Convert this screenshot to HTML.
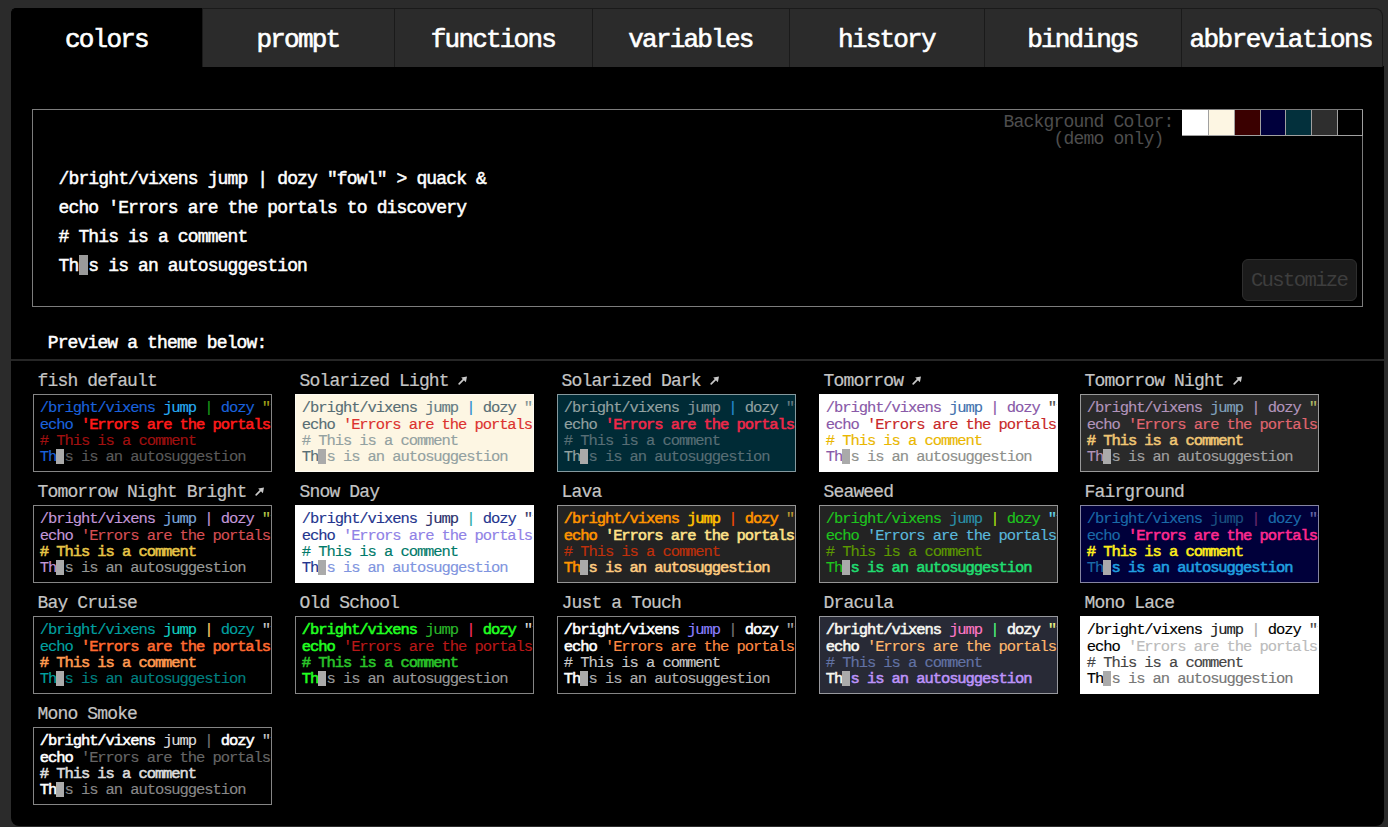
<!DOCTYPE html>
<html><head><meta charset="utf-8"><title>fish shell configuration</title>
<style>
html,body{margin:0;padding:0}
body{width:1388px;height:827px;overflow:hidden;position:relative;background:#2b2b2b;font-family:"Liberation Mono",monospace;color:#fff}
div,svg{position:absolute;box-sizing:border-box}
.wrap{left:11px;top:66px;width:1373px;height:760px;background:#000;border-radius:0 0 8px 8px;overflow:hidden}
.tab{top:8px;height:59px;background:#2b2b2b;border-top:1px solid #1a1a1a;border-left:1px solid #1a1a1a;text-align:center;font-size:26px;letter-spacing:-1.8px;line-height:30px;padding-top:16px;-webkit-text-stroke-width:0.6px}
.tab span{position:relative;left:-0.6px}
.tab.ab span{letter-spacing:-1.55px;left:-1.2px}
.tab.ab{border-right:1px solid #1a1a1a;border-top-right-radius:8px}
.tab.sel{background:#000;border-color:#000;border-top-left-radius:5px}
.tabr{border-top-right-radius:5px}
.mbox{left:32px;top:109px;width:1331px;height:198px;border:1px solid #7c7c7c}
.mtext{left:58.5px;top:165.3px;-webkit-text-stroke-width:0.5px;font-size:18px;letter-spacing:-0.86px;line-height:28.77px;white-space:pre;color:#fff}
.mcur{left:79.4px;top:255.4px;width:9.1px;height:19.6px;background:#9a9a9a}
.bgl{font-size:18px;letter-spacing:-0.8px;color:#4e4e4e;white-space:pre;line-height:normal;text-align:right}
.sw{top:110px;height:25px}
.swl{top:109px;width:1px;height:27px;background:#a0a0a0}
.swb{left:1182px;top:135px;width:181px;height:1px;background:#a0a0a0}
.swt{left:1182px;top:109px;width:181px;height:1px;background:#7c7c7c}
.btn{left:1242px;top:259px;width:115px;height:42px;border:1px solid #2e2e2e;border-radius:6px;background:#1b1b1b}
.btnt{left:1250.9px;top:269.15px;font-size:20.6px;letter-spacing:-1.65px;color:#3e3e3e;white-space:pre;line-height:normal}
.prev{left:47.7px;top:333px;-webkit-text-stroke-width:0.5px;font-size:18px;letter-spacing:-0.86px;white-space:pre;line-height:normal}
.hr{left:11px;top:359px;width:1373px;height:2px;background:#262626}
.tt{font-size:18px;letter-spacing:-0.86px;color:#c4c4c4;-webkit-text-stroke-width:0.2px;white-space:pre;line-height:normal}
.tb{width:239px;height:78px;border:1px solid rgba(255,255,255,0.52);overflow:hidden}
.tp{left:5.8px;top:5.4px;font-size:15.5px;letter-spacing:-1.08px;line-height:16.27px;white-space:pre;-webkit-text-stroke-width:0.15px}
.cur{left:22.2px;top:54.4px;width:7.5px;height:15px;background:#aaa}
</style></head><body>
<div class="wrap"></div>
<div class="tab sel" style="left:11px;width:191px"><span>colors</span></div><div class="tab" style="left:202px;width:192px"><span>prompt</span></div><div class="tab" style="left:394px;width:198px"><span>functions</span></div><div class="tab" style="left:592px;width:197px"><span>variables</span></div><div class="tab" style="left:789px;width:195px"><span>history</span></div><div class="tab" style="left:984px;width:197px"><span>bindings</span></div><div class="tab ab" style="left:1181px;width:202px"><span>abbreviations</span></div>
<div class="mbox"></div>
<div class="mtext">/bright/vixens jump | dozy "fowl" &gt; quack &amp;<br>echo 'Errors are the portals to discovery<br># This is a comment<br>Th s is an autosuggestion</div>
<div class="mcur"></div>
<div class="bgl" style="right:214.5px;top:111.9px">Background Color:</div>
<div class="bgl" style="right:224.5px;top:128.9px">(demo only)</div>
<div class="sw" style="left:1182.00px;width:26.00px;background:#ffffff"></div><div class="sw" style="left:1208.00px;width:26.00px;background:#fdf6e3"></div><div class="sw" style="left:1234.00px;width:25.60px;background:#3a0000"></div><div class="sw" style="left:1259.60px;width:25.80px;background:#00003c"></div><div class="sw" style="left:1285.40px;width:25.80px;background:#03303c"></div><div class="sw" style="left:1311.20px;width:25.80px;background:#2e2e2e"></div><div class="sw" style="left:1337.00px;width:25.50px;background:#000000"></div><div class="swl" style="left:1208px"></div><div class="swl" style="left:1234px"></div><div class="swl" style="left:1260px"></div><div class="swl" style="left:1285px"></div><div class="swl" style="left:1311px"></div><div class="swl" style="left:1337px"></div><div class="swl" style="left:1362px"></div><div class="swt"></div>
<div class="swb"></div>
<div class="btn"></div>
<div class="btnt">Customize</div>
<div class="prev">Preview a theme below:</div>
<div class="hr"></div>
<div class="tt" style="left:37.6px;top:370.62px">fish default</div><div class="tb" style="left:33px;top:394px;background:#000"><div class="tp"><span style="color:#1a62dc;">/bright/vixens</span> <span style="color:#27aef5;">jump</span> <span style="color:#199a19;">|</span> <span style="color:#1a62dc;">dozy</span> <span style="color:#a5a51a;">&quot;fowl&quot;</span> <span style="color:#27aef5;">&gt; quack</span><br><span style="color:#1a62dc;">echo</span> <span style="color:#ff1a1a;-webkit-text-stroke-width:0.55px;">&#x27;Errors are the portals to discovery</span><br><span style="color:#a01010;"># This is a comment</span><br><span style="color:#1a62dc;">Th</span> <span style="color:#5a5a5a;">s is an autosuggestion</span></div><div class="cur"></div></div><div class="tt" style="left:299.6px;top:370.62px">Solarized Light</div><svg class="arr" style="left:457.64px;top:374.60px" width="11" height="11" viewBox="0 0 11 11"><path d="M1.2 8.8 L6.6 3.4" stroke="#c8c8c8" stroke-width="1.7" stroke-linecap="round"/><path d="M9 1.4 L3.2 2.5 L7.9 7.2 Z" fill="#c8c8c8"/></svg><div class="tb" style="left:295px;top:394px;background:#fdf6e3"><div class="tp"><span style="color:#586e75;">/bright/vixens</span> <span style="color:#657b83;">jump</span> <span style="color:#268bd2;">|</span> <span style="color:#586e75;">dozy</span> <span style="color:#839496;">&quot;fowl&quot;</span> <span style="color:#657b83;">&gt; quack</span><br><span style="color:#586e75;">echo</span> <span style="color:#dc322f;">&#x27;Errors are the portals to discovery</span><br><span style="color:#93a1a1;"># This is a comment</span><br><span style="color:#586e75;">Th</span> <span style="color:#93a1a1;">s is an autosuggestion</span></div><div class="cur"></div></div><div class="tt" style="left:561.6px;top:370.62px">Solarized Dark</div><svg class="arr" style="left:709.70px;top:374.60px" width="11" height="11" viewBox="0 0 11 11"><path d="M1.2 8.8 L6.6 3.4" stroke="#c8c8c8" stroke-width="1.7" stroke-linecap="round"/><path d="M9 1.4 L3.2 2.5 L7.9 7.2 Z" fill="#c8c8c8"/></svg><div class="tb" style="left:557px;top:394px;background:#002b36"><div class="tp"><span style="color:#93a1a1;">/bright/vixens</span> <span style="color:#839496;">jump</span> <span style="color:#268bd2;">|</span> <span style="color:#93a1a1;">dozy</span> <span style="color:#657b83;">&quot;fowl&quot;</span> <span style="color:#839496;">&gt; quack</span><br><span style="color:#93a1a1;">echo</span> <span style="color:#f0284a;-webkit-text-stroke-width:0.55px;">&#x27;Errors are the portals to discovery</span><br><span style="color:#586e75;"># This is a comment</span><br><span style="color:#93a1a1;">Th</span> <span style="color:#586e75;">s is an autosuggestion</span></div><div class="cur"></div></div><div class="tt" style="left:823.6px;top:370.62px">Tomorrow</div><svg class="arr" style="left:912.06px;top:374.60px" width="11" height="11" viewBox="0 0 11 11"><path d="M1.2 8.8 L6.6 3.4" stroke="#c8c8c8" stroke-width="1.7" stroke-linecap="round"/><path d="M9 1.4 L3.2 2.5 L7.9 7.2 Z" fill="#c8c8c8"/></svg><div class="tb" style="left:819px;top:394px;background:#ffffff"><div class="tp"><span style="color:#8959a8;">/bright/vixens</span> <span style="color:#4271ae;">jump</span> <span style="color:#8959a8;">|</span> <span style="color:#8959a8;">dozy</span> <span style="color:#4d4d4c;">&quot;fowl&quot;</span> <span style="color:#4271ae;">&gt; quack</span><br><span style="color:#8959a8;">echo</span> <span style="color:#c82829;">&#x27;Errors are the portals to discovery</span><br><span style="color:#eab700;"># This is a comment</span><br><span style="color:#8959a8;">Th</span> <span style="color:#8e908c;">s is an autosuggestion</span></div><div class="cur"></div></div><div class="tt" style="left:1084.6px;top:370.62px">Tomorrow Night</div><svg class="arr" style="left:1232.70px;top:374.60px" width="11" height="11" viewBox="0 0 11 11"><path d="M1.2 8.8 L6.6 3.4" stroke="#c8c8c8" stroke-width="1.7" stroke-linecap="round"/><path d="M9 1.4 L3.2 2.5 L7.9 7.2 Z" fill="#c8c8c8"/></svg><div class="tb" style="left:1080px;top:394px;background:#2a2a2a"><div class="tp"><span style="color:#b294bb;">/bright/vixens</span> <span style="color:#81a2be;">jump</span> <span style="color:#b294bb;">|</span> <span style="color:#b294bb;">dozy</span> <span style="color:#b5bd68;">&quot;fowl&quot;</span> <span style="color:#81a2be;">&gt; quack</span><br><span style="color:#b294bb;">echo</span> <span style="color:#e06670;">&#x27;Errors are the portals to discovery</span><br><span style="color:#f0c674;-webkit-text-stroke-width:0.55px;"># This is a comment</span><br><span style="color:#b294bb;">Th</span> <span style="color:#a0a0a0;">s is an autosuggestion</span></div><div class="cur"></div></div><div class="tt" style="left:37.6px;top:481.62px">Tomorrow Night Bright</div><svg class="arr" style="left:255.28px;top:485.60px" width="11" height="11" viewBox="0 0 11 11"><path d="M1.2 8.8 L6.6 3.4" stroke="#c8c8c8" stroke-width="1.7" stroke-linecap="round"/><path d="M9 1.4 L3.2 2.5 L7.9 7.2 Z" fill="#c8c8c8"/></svg><div class="tb" style="left:33px;top:505px;background:#000"><div class="tp"><span style="color:#c397d8;">/bright/vixens</span> <span style="color:#7aa6da;">jump</span> <span style="color:#c397d8;">|</span> <span style="color:#c397d8;">dozy</span> <span style="color:#b9ca4a;">&quot;fowl&quot;</span> <span style="color:#7aa6da;">&gt; quack</span><br><span style="color:#c397d8;">echo</span> <span style="color:#d54e53;">&#x27;Errors are the portals to discovery</span><br><span style="color:#e7c547;-webkit-text-stroke-width:0.55px;"># This is a comment</span><br><span style="color:#c397d8;">Th</span> <span style="color:#969896;">s is an autosuggestion</span></div><div class="cur"></div></div><div class="tt" style="left:299.6px;top:481.62px">Snow Day</div><div class="tb" style="left:295px;top:505px;background:#ffffff"><div class="tp"><span style="color:#24358e;">/bright/vixens</span> <span style="color:#2c2f6a;">jump</span> <span style="color:#1aa8a8;">|</span> <span style="color:#24358e;">dozy</span> <span style="color:#3a3a6a;">&quot;fowl&quot;</span> <span style="color:#2c2f6a;">&gt; quack</span><br><span style="color:#24358e;">echo</span> <span style="color:#9082e6;">&#x27;Errors are the portals to discovery</span><br><span style="color:#007a6a;"># This is a comment</span><br><span style="color:#24358e;">Th</span> <span style="color:#7f95e0;">s is an autosuggestion</span></div><div class="cur"></div></div><div class="tt" style="left:561.6px;top:481.62px">Lava</div><div class="tb" style="left:557px;top:505px;background:#232323"><div class="tp"><span style="color:#ff9400;-webkit-text-stroke-width:0.55px;">/bright/vixens</span> <span style="color:#ffc000;-webkit-text-stroke-width:0.55px;">jump</span> <span style="color:#ff4c00;">|</span> <span style="color:#ff9400;-webkit-text-stroke-width:0.55px;">dozy</span> <span style="color:#bf9c30;">&quot;fowl&quot;</span> <span style="color:#ffc000;-webkit-text-stroke-width:0.55px;">&gt; quack</span><br><span style="color:#ff9400;-webkit-text-stroke-width:0.55px;">echo</span> <span style="color:#ffe38a;-webkit-text-stroke-width:0.55px;">&#x27;Errors are the portals to discovery</span><br><span style="color:#c0300a;"># This is a comment</span><br><span style="color:#ff9400;-webkit-text-stroke-width:0.55px;">Th</span> <span style="color:#ffcc80;-webkit-text-stroke-width:0.55px;">s is an autosuggestion</span></div><div class="cur"></div></div><div class="tt" style="left:823.6px;top:481.62px">Seaweed</div><div class="tb" style="left:819px;top:505px;background:#232323"><div class="tp"><span style="color:#1ec41e;">/bright/vixens</span> <span style="color:#2a90a8;">jump</span> <span style="color:#a8e010;">|</span> <span style="color:#1ec41e;">dozy</span> <span style="color:#67d9f0;">&quot;fowl&quot;</span> <span style="color:#2a90a8;">&gt; quack</span><br><span style="color:#1ec41e;">echo</span> <span style="color:#5ab8dc;">&#x27;Errors are the portals to discovery</span><br><span style="color:#5c9900;"># This is a comment</span><br><span style="color:#1ec41e;">Th</span> <span style="color:#20dd70;-webkit-text-stroke-width:0.55px;">s is an autosuggestion</span></div><div class="cur"></div></div><div class="tt" style="left:1084.6px;top:481.62px">Fairground</div><div class="tb" style="left:1080px;top:505px;background:#00003a"><div class="tp"><span style="color:#1a6aa8;">/bright/vixens</span> <span style="color:#1a5080;">jump</span> <span style="color:#6a2a6a;">|</span> <span style="color:#1a6aa8;">dozy</span> <span style="color:#6a6aa8;">&quot;fowl&quot;</span> <span style="color:#1a5080;">&gt; quack</span><br><span style="color:#1a6aa8;">echo</span> <span style="color:#ff2a90;-webkit-text-stroke-width:0.55px;">&#x27;Errors are the portals to discovery</span><br><span style="color:#ffee1a;-webkit-text-stroke-width:0.55px;"># This is a comment</span><br><span style="color:#1a6aa8;">Th</span> <span style="color:#20a0e0;-webkit-text-stroke-width:0.55px;">s is an autosuggestion</span></div><div class="cur"></div></div><div class="tt" style="left:37.6px;top:592.62px">Bay Cruise</div><div class="tb" style="left:33px;top:616px;background:#000"><div class="tp"><span style="color:#00a0a0;">/bright/vixens</span> <span style="color:#10d0c0;">jump</span> <span style="color:#ffcc66;">|</span> <span style="color:#00a0a0;">dozy</span> <span style="color:#cccccc;">&quot;fowl&quot;</span> <span style="color:#10d0c0;">&gt; quack</span><br><span style="color:#00a0a0;">echo</span> <span style="color:#ff6a30;-webkit-text-stroke-width:0.55px;">&#x27;Errors are the portals to discovery</span><br><span style="color:#ff9a50;-webkit-text-stroke-width:0.55px;"># This is a comment</span><br><span style="color:#00a0a0;">Th</span> <span style="color:#008080;">s is an autosuggestion</span></div><div class="cur"></div></div><div class="tt" style="left:299.6px;top:592.62px">Old School</div><div class="tb" style="left:295px;top:616px;background:#000"><div class="tp"><span style="color:#22ff22;-webkit-text-stroke-width:0.55px;">/bright/vixens</span> <span style="color:#2ab82a;">jump</span> <span style="color:#ff3060;">|</span> <span style="color:#22ff22;-webkit-text-stroke-width:0.55px;">dozy</span> <span style="color:#dddddd;">&quot;fowl&quot;</span> <span style="color:#2ab82a;">&gt; quack</span><br><span style="color:#22ff22;-webkit-text-stroke-width:0.55px;">echo</span> <span style="color:#b81818;">&#x27;Errors are the portals to discovery</span><br><span style="color:#2ac52a;-webkit-text-stroke-width:0.55px;"># This is a comment</span><br><span style="color:#22ff22;-webkit-text-stroke-width:0.55px;">Th</span> <span style="color:#999999;">s is an autosuggestion</span></div><div class="cur"></div></div><div class="tt" style="left:561.6px;top:592.62px">Just a Touch</div><div class="tb" style="left:557px;top:616px;background:#000"><div class="tp"><span style="color:#ffffff;-webkit-text-stroke-width:0.55px;">/bright/vixens</span> <span style="color:#8a80ff;">jump</span> <span style="color:#777777;">|</span> <span style="color:#ffffff;-webkit-text-stroke-width:0.55px;">dozy</span> <span style="color:#aaaaaa;">&quot;fowl&quot;</span> <span style="color:#8a80ff;">&gt; quack</span><br><span style="color:#ffffff;-webkit-text-stroke-width:0.55px;">echo</span> <span style="color:#ff8a44;">&#x27;Errors are the portals to discovery</span><br><span style="color:#c8c8c8;"># This is a comment</span><br><span style="color:#ffffff;-webkit-text-stroke-width:0.55px;">Th</span> <span style="color:#b0b0b0;">s is an autosuggestion</span></div><div class="cur"></div></div><div class="tt" style="left:823.6px;top:592.62px">Dracula</div><div class="tb" style="left:819px;top:616px;background:#282a36"><div class="tp"><span style="color:#f8f8f2;-webkit-text-stroke-width:0.55px;">/bright/vixens</span> <span style="color:#ff79c6;">jump</span> <span style="color:#50fa7b;">|</span> <span style="color:#f8f8f2;-webkit-text-stroke-width:0.55px;">dozy</span> <span style="color:#f1fa8c;">&quot;fowl&quot;</span> <span style="color:#ff79c6;">&gt; quack</span><br><span style="color:#f8f8f2;-webkit-text-stroke-width:0.55px;">echo</span> <span style="color:#ffb86c;">&#x27;Errors are the portals to discovery</span><br><span style="color:#6272a4;"># This is a comment</span><br><span style="color:#f8f8f2;-webkit-text-stroke-width:0.55px;">Th</span> <span style="color:#bd93f9;-webkit-text-stroke-width:0.55px;">s is an autosuggestion</span></div><div class="cur"></div></div><div class="tt" style="left:1084.6px;top:592.62px">Mono Lace</div><div class="tb" style="left:1080px;top:616px;background:#ffffff"><div class="tp"><span style="color:#000000;">/bright/vixens</span> <span style="color:#222222;">jump</span> <span style="color:#aaaaaa;">|</span> <span style="color:#000000;">dozy</span> <span style="color:#444444;">&quot;fowl&quot;</span> <span style="color:#222222;">&gt; quack</span><br><span style="color:#000000;">echo</span> <span style="color:#bbbbbb;">&#x27;Errors are the portals to discovery</span><br><span style="color:#444444;"># This is a comment</span><br><span style="color:#000000;">Th</span> <span style="color:#777777;">s is an autosuggestion</span></div><div class="cur"></div></div><div class="tt" style="left:37.6px;top:703.62px">Mono Smoke</div><div class="tb" style="left:33px;top:727px;background:#000"><div class="tp"><span style="color:#ffffff;-webkit-text-stroke-width:0.55px;">/bright/vixens</span> <span style="color:#dddddd;">jump</span> <span style="color:#777777;">|</span> <span style="color:#ffffff;-webkit-text-stroke-width:0.55px;">dozy</span> <span style="color:#cccccc;">&quot;fowl&quot;</span> <span style="color:#dddddd;">&gt; quack</span><br><span style="color:#ffffff;-webkit-text-stroke-width:0.55px;">echo</span> <span style="color:#666666;">&#x27;Errors are the portals to discovery</span><br><span style="color:#dddddd;-webkit-text-stroke-width:0.55px;"># This is a comment</span><br><span style="color:#ffffff;-webkit-text-stroke-width:0.55px;">Th</span> <span style="color:#888888;">s is an autosuggestion</span></div><div class="cur"></div></div>
</body></html>
